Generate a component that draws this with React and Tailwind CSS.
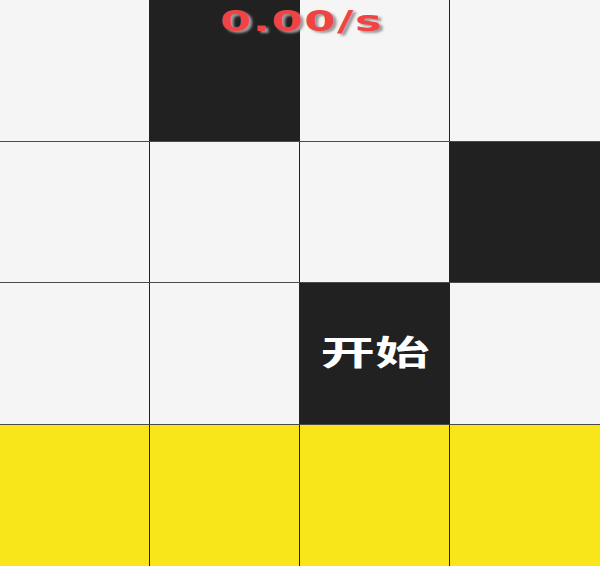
import React from 'react';

// 0 = white, 1 = black, 2 = yellow
const rows = [
  [0, 1, 0, 0],
  [0, 0, 0, 1],
  [0, 0, 1, 0],
  [2, 2, 2, 2],
];

const tileColor = {
  0: 'bg-[#f5f5f5]',
  1: 'bg-[#212121]',
  2: 'bg-[#f8e51a]',
};

const App = () => {
  return (
    <div className="relative w-[600px] h-[566px] overflow-hidden bg-[#f5f5f5] font-['DejaVu_Sans','Noto_Sans_CJK_SC',sans-serif]">
      <div className="grid grid-rows-4 h-full">
        {rows.map((row, r) => (
          <div key={r} className={`grid grid-cols-4 ${r < 3 ? 'border-b border-[#4a4a4a]' : ''}`}>
            {row.map((t, c) => (
              <div
                key={c}
                className={`${tileColor[t]} ${c < 3 ? 'border-r border-[#222]' : ''} flex items-center justify-center`}
              >
                {r === 2 && c === 2 && (
                  <span className="text-white font-bold text-[34px] leading-none scale-x-[1.6] inline-block">
                    开始
                  </span>
                )}
              </div>
            ))}
          </div>
        ))}
      </div>

      {/* timer */}
      <div className="absolute top-[7px] left-0 right-0 flex justify-center pl-[4px]">
        <span className="inline-block scale-x-[1.55] text-[#f04444] font-bold text-[29px] leading-none tracking-[1px] [text-shadow:2px_2px_2px_#9a9a9a]">
          0.00/s
        </span>
      </div>
    </div>
  );
};

export default App;
